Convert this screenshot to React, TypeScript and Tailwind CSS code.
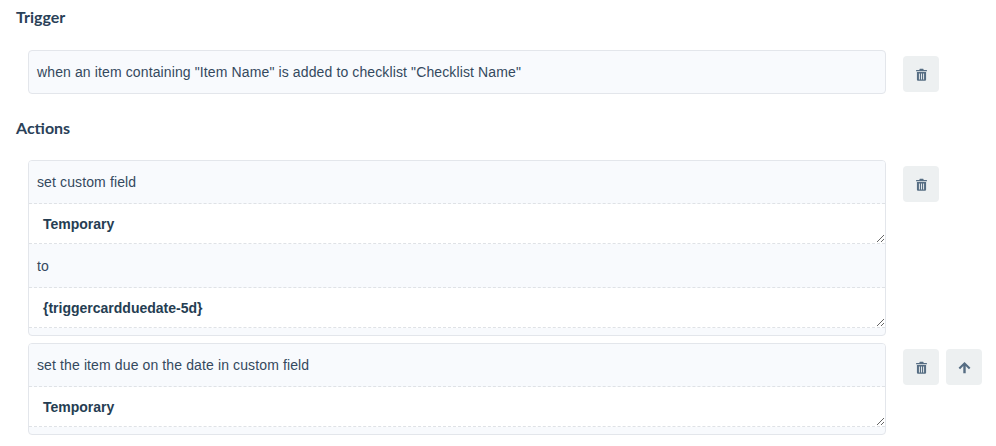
import React from 'react';

const TrashIcon: React.FC = () => (
  <svg viewBox="0 0 12 14" className="w-[11px] h-[13px] text-[#566d83]" fill="currentColor">
    <path d="M4.2 0.6h3.600l.7 1.400H11.500a.5.5 0 0 1 .5.5V3.500H0V2.500A.5.5 0 0 1 .5 2h3z" />
    <path fillRule="evenodd" d="M1 4.300h10v8.400a1.200 1.200 0 0 1-1.200 1.200H2.200A1.200 1.200 0 0 1 1 12.700zM3.200 5.800v6.600h1V5.800zM5.500 5.800v6.600h1V5.800zM7.800 5.800v6.600h1V5.800z" />
  </svg>
);

const ArrowIcon: React.FC = () => (
  <svg viewBox="0 0 14 14" className="w-[13px] h-[13px] text-[#566d83]" fill="currentColor">
    <path d="M7 1 13.400 7.300 11.800 8.900 8.300 5.400V13.300H5.700V5.400L2.200 8.900.6 7.300z" />
  </svg>
);

const IconButton: React.FC<{ children: React.ReactNode }> = ({ children }) => (
  <button className="w-9 h-9 rounded-[4px] bg-[#edf0f1] flex items-center justify-center">{children}</button>
);

const Heading: React.FC<{ children: React.ReactNode }> = ({ children }) => (
  <h3 className="font-['Lato',sans-serif] font-bold text-[16px] leading-[18px] text-[#2a4158]">{children}</h3>
);

const TextRow: React.FC<{ text: string; h: string }> = ({ text, h }) => (
  <div className={`${h} px-2 flex items-center border-b border-dashed border-[#dfe2e6] bg-[#f8fafd] text-[14px] tracking-[0.12px] text-[#34495e]`}>
    {text}
  </div>
);

const FieldRow: React.FC<{ value: string }> = ({ value }) => (
  <textarea
    defaultValue={value}
    readOnly
    className="block w-full h-10 bg-white border-b border-dashed border-[#dfe2e6] px-[14px] pt-[11px] font-bold text-[14px] leading-[18px] text-[#253d52] outline-none resize-y"
  />
);

export default function App() {
  return (
    <div className="w-[996px] h-[446px] overflow-hidden bg-white font-['Liberation_Sans',sans-serif] pl-4">
      <div className="pt-2">
        <Heading>Trigger</Heading>
      </div>

      <div className="flex items-start mt-[24px] pl-3">
        <div className="w-[858px] h-[44px] rounded-[4px] border border-[#e3e6eb] bg-[#f8fafd] px-2 flex items-center text-[14px] tracking-[0.12px] text-[#34495e]">
          when an item containing "Item Name" is added to checklist "Checklist Name"
        </div>
        <div className="ml-[17px] mt-[6px]">
          <IconButton><TrashIcon /></IconButton>
        </div>
      </div>

      <div className="mt-[25px]">
        <Heading>Actions</Heading>
      </div>

      <div className="flex items-start mt-[23px] pl-3">
        <div className="w-[858px] h-[176px] rounded-[4px] border border-[#e3e6eb] bg-[#f8fafd] overflow-hidden">
          <TextRow text="set custom field" h="h-[43px]" />
          <FieldRow value="Temporary" />
          <TextRow text="to" h="h-[44px] pt-[2px]" />
          <FieldRow value="{triggercardduedate-5d}" />
        </div>
        <div className="ml-[17px] mt-[6px]">
          <IconButton><TrashIcon /></IconButton>
        </div>
      </div>

      <div className="flex items-start mt-[7px] pl-3">
        <div className="w-[858px] h-[92px] rounded-[4px] border border-[#e3e6eb] bg-[#f8fafd] overflow-hidden">
          <TextRow text="set the item due on the date in custom field" h="h-[43px]" />
          <FieldRow value="Temporary" />
        </div>
        <div className="ml-[17px] mt-[6px] flex gap-[7px]">
          <IconButton><TrashIcon /></IconButton>
          <IconButton><ArrowIcon /></IconButton>
        </div>
      </div>
    </div>
  );
}
